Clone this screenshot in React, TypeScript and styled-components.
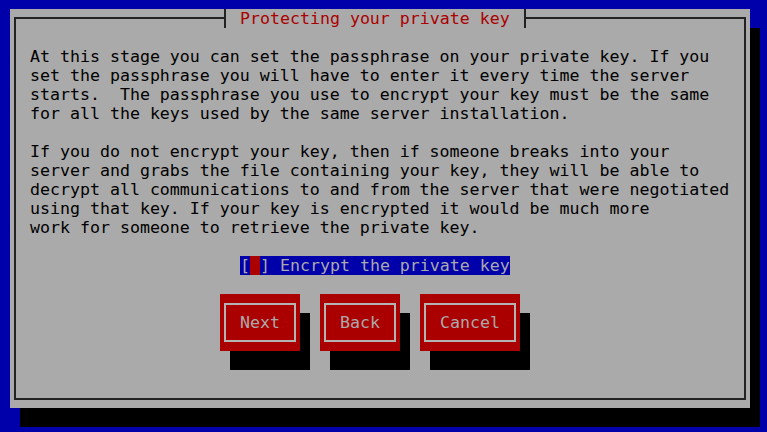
import React from "react";
import styled, { createGlobalStyle } from "styled-components";

const Global = createGlobalStyle`
  html, body {
    margin: 0;
    padding: 0;
    background: #0000aa;
    overflow: hidden;
  }
  * { box-sizing: border-box; }
`;

const Screen = styled.div`
  width: 767px;
  height: 432px;
  background: #0000aa;
  padding: 9px 0 0 10px;
  font-family: "DejaVu Sans Mono", "Liberation Mono", monospace;
  font-size: 16.6px;
  line-height: 19px;
`;

const Dialog = styled.div`
  position: relative;
  width: 740px;
  height: 399px;
  padding: 8px 4px 0 4px;
  background: #aaaaaa;
  box-shadow: 10px 19px 0 #000000;
`;

const Frame = styled.div`
  height: 383px;
  border: 2px solid #222222;
  padding: 28px 0 0 14px;
`;

const Title = styled.div`
  position: absolute;
  top: 0;
  left: 214px;
  height: 19px;
  padding: 0 14px;
  background: #aaaaaa;
  border-left: 2px solid #222222;
  border-right: 2px solid #222222;
  color: #aa0000;
  white-space: pre;
  line-height: 19px;
`;

const Paragraph = styled.p<{ $gap?: boolean }>`
  margin: ${(p) => (p.$gap ? "19px" : "0")} 0 0 0;
  white-space: pre;
  color: #000000;
`;

const CheckRow = styled.div`
  margin: 19px 0 0 210px;
  display: flex;
`;

const CheckLabel = styled.span`
  display: inline-flex;
  background: #0000aa;
  color: #aaaaaa;
  white-space: pre;
  height: 19px;
`;

const Cursor = styled.span`
  background: #aa0000;
  width: 10px;
  display: inline-block;
`;

const ButtonRow = styled.div`
  margin: 19px 0 0 190px;
  display: flex;
  gap: 20px;
`;

const Button = styled.div<{ $cols: number }>`
  width: ${(p) => p.$cols * 10}px;
  height: 57px;
  background: #aa0000;
  box-shadow: 10px 19px 0 #000000;
  padding: 9px 4px;
`;

const ButtonInner = styled.div`
  height: 100%;
  border: 2px solid #b4b4b4;
  display: flex;
  align-items: center;
  justify-content: center;
  color: #aaaaaa;
  white-space: pre;
`;

export default function App() {
  return (
    <>
      <Global />
      <Screen>
        <Dialog>
          <Title>Protecting your private key</Title>
          <Frame>
            <Paragraph>
              {"At this stage you can set the passphrase on your private key. If you\n" +
                "set the passphrase you will have to enter it every time the server\n" +
                "starts.  The passphrase you use to encrypt your key must be the same\n" +
                "for all the keys used by the same server installation."}
            </Paragraph>
            <Paragraph $gap>
              {"If you do not encrypt your key, then if someone breaks into your\n" +
                "server and grabs the file containing your key, they will be able to\n" +
                "decrypt all communications to and from the server that were negotiated\n" +
                "using that key. If your key is encrypted it would be much more\n" +
                "work for someone to retrieve the private key."}
            </Paragraph>
            <CheckRow>
              <CheckLabel>
                [<Cursor> </Cursor>] Encrypt the private key
              </CheckLabel>
            </CheckRow>
            <ButtonRow>
              <Button $cols={8}>
                <ButtonInner>Next</ButtonInner>
              </Button>
              <Button $cols={8}>
                <ButtonInner>Back</ButtonInner>
              </Button>
              <Button $cols={10}>
                <ButtonInner>Cancel</ButtonInner>
              </Button>
            </ButtonRow>
          </Frame>
        </Dialog>
      </Screen>
    </>
  );
}
